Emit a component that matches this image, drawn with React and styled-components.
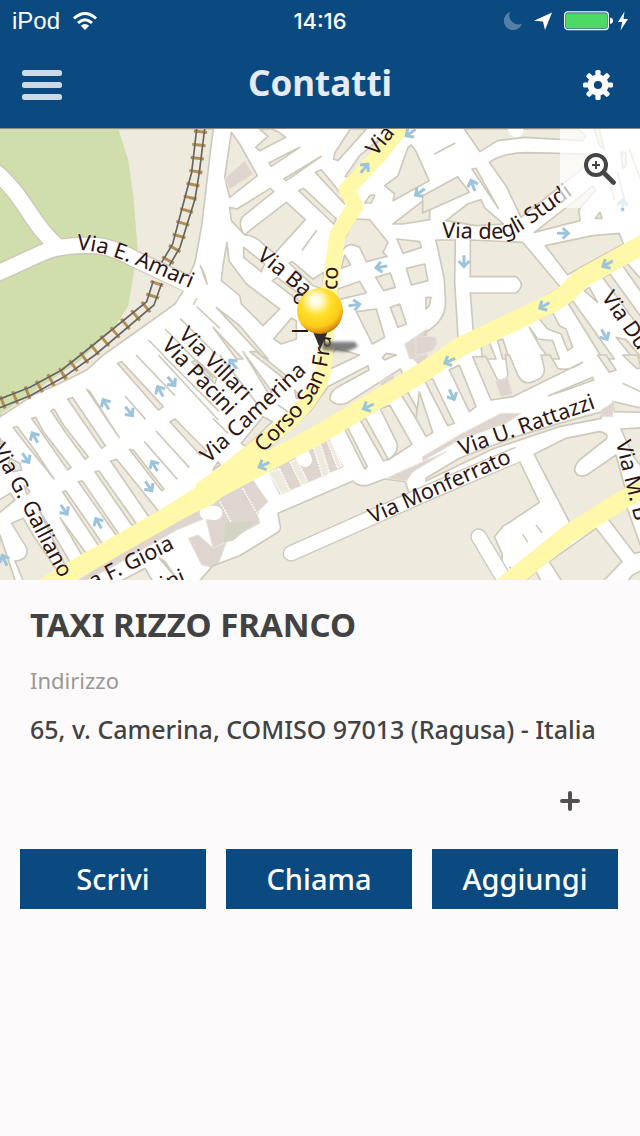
import React from "react";
import styled, { createGlobalStyle } from "styled-components";

const GlobalStyle = createGlobalStyle`
  * {
    box-sizing: border-box;
  }

  body {
    margin: 0;
    background: #fcfafb;
    font-family: "Noto Sans", "Open Sans", sans-serif;
    color: #424242;
  }
`;

const Screen = styled.div`
  display: flex;
  flex-direction: column;
  min-height: 100vh;
`;

const Header = styled.header`
  background: #0b4a80;
  color: white;
`;

const StatusBar = styled.div`
  display: grid;
  grid-template-columns: 1fr auto 1fr;
  align-items: center;
  height: 42px;
  padding: 0 12px;
  font-family: "Liberation Sans", Arial, sans-serif;
  font-size: 24px;
`;

const StatusGroup = styled.div`
  display: flex;
  align-items: center;
  justify-content: ${props => (props.$end ? "flex-end" : "flex-start")};
  gap: 12px;
`;

const Power = styled.div`
  display: flex;
  align-items: center;
  gap: 5px;
`;

const Clock = styled.div`
  font-family: Inter, "Liberation Sans", sans-serif;
  font-size: 22px;
  font-weight: 500;
`;

const NavBar = styled.nav`
  display: grid;
  grid-template-columns: 1fr auto 1fr;
  align-items: center;
  height: 86px;
  padding: 0 20px;
`;

const Title = styled.h1`
  margin: 0;
  padding-bottom: 4px;
  font-size: 35px;
  line-height: 44px;
  font-weight: 700;
  color: #e6ebf3;
`;

const IconButton = styled.button`
  display: flex;
  align-items: center;
  justify-content: center;
  justify-self: ${props => props.$side || "start"};
  width: 44px;
  height: 44px;
  padding: 0;
  border: 0;
  background: none;
  color: ${props => props.$color || "white"};
`;

const MapBox = styled.section`
  position: relative;
  border-top: 1px solid #8b8a86;
  background: white;

  > svg {
    display: block;
    width: 100%;
    height: auto;
  }
`;

// sits over the top right corner of the map
const ZoomButton = styled.button`
  position: absolute;
  top: 0;
  right: 0;
  display: flex;
  align-items: center;
  justify-content: center;
  width: 80px;
  height: 79px;
  padding: 0;
  border: 0;
  background: rgba(255, 255, 255, 0.7);
`;

const Details = styled.section`
  padding: 23px 30px 0;
`;

const Name = styled.h2`
  margin: 0 0 17px;
  font-size: 33px;
  line-height: 44px;
  font-weight: 700;
`;

const Label = styled.div`
  margin-bottom: 13px;
  font-size: 22px;
  line-height: 32px;
  color: #999798;
`;

const Address = styled.div`
  font-size: 25px;
  line-height: 40px;
  font-weight: 500;
`;

const MoreRow = styled.div`
  display: flex;
  justify-content: flex-end;
  padding: 30px 48px 26px;
`;

const Actions = styled.div`
  display: flex;
  gap: 20px;
  padding: 0 22px 0 20px;
`;

const ActionButton = styled.button`
  flex: 1;
  height: 60px;
  padding: 0 0 2px;
  border: 0;
  background: #0b4a80;
  color: white;
  font-family: inherit;
  font-size: 29px;
  font-weight: 500;
`;

// every sector is drawn from its own top left corner
const sectors = [
  {
    x: 639,
    y: 0,
    land: `M55,10 L35,145 50,205 133,140 80,45Z M140,0 L165,22 128,55 140,65 218,25 195,8 175,0Z
      M167,102 L260,55 175,112Z M212,150 L325,82 220,155Z M362,90 L365,72 412,0 460,0 375,95Z
      M50,235 L72,240 172,178 182,188 90,262 Q72,285 95,318 L55,275Z
      M220,220 L277,272 185,373 150,345 Q125,318 95,318 L110,305Z
      M92,355 L155,405 145,428 92,385Z M228,402 L238,398 300,450 332,430 330,480 300,470Z
      M178,455 L192,445 280,510 270,525Z
      M42,340 L48,395 100,465 200,540 150,590 85,525 80,500 25,455 30,410Z
      M257,185 L272,178 370,270 362,285Z M307,130 L325,122 385,195 395,225Z
      M397,142 L440,80 500,30 480,70 405,145Z M268,363 L310,305 270,360Z
      M400,320 L425,270 470,272 525,340 510,370 522,382 460,398 440,355 Q405,335 388,365 L385,330Z
      M455,222 L470,200 485,198 475,222Z
      M585,55 L595,48 608,65 648,155 540,215 545,195 515,170 555,140Z
      M650,200 L540,285 570,285 650,272Z M552,330 L620,338 625,355 570,373Z
      M580,418 L635,405 645,455 595,468Z M488,445 L532,432 547,475 512,485Z
      M375,480 L440,457 460,492 365,515Z M395,378 L413,408 385,418Z
      M430,548 L490,540 515,625 478,645Z M532,535 L560,525 580,585 555,595Z
      M182,630 L235,568 250,575 250,630 205,645Z M10,535 L80,590 165,690 145,680Z
      M0,595 L90,690 70,690Z M-18,465 L-24,440 -38,410Z`,
    pale: `M35,150 L95,95 120,135 50,180Z M575,645 L642,600 660,690 590,690Z`,
  },
  {
    x: 1278,
    y: 0,
    land: `M115,0 L162,68 215,35 295,25 470,35 480,20 455,0Z M25,75 L88,42
      M-10,200 L95,143 130,190 -10,252Z
      M190,100 Q230,72 300,71 L495,75 480,110 285,265 240,170Z M138,120 L150,118 217,238Z
      M125,225 L165,212 175,235 232,285 150,290 60,275Z
      M325,310 L460,205 500,170 508,185 458,242 462,275Z M508,268 L522,250 528,268Z
      M358,350 L500,320 580,313 592,345 425,437Z
      M30,333 L88,333 86,460 97,640 0,690 0,610 Q65,570 58,510 L55,450Z M0,505 L15,505 10,530 0,540Z
      M133,333 L290,340 403,475 330,520 143,620 133,492 270,492 Q302,468 270,443 L133,443Z
      M475,485 L490,475 515,520Z M530,445 L552,435 650,570 650,610Z M590,410 L600,400 650,455 650,495Z
      M310,595 L335,630 380,635 400,690 370,690 340,650Z
      M340,570 L380,550 400,590 420,600 440,655 425,665 405,615 365,600Z
      M428,525 L440,515 565,690 530,690Z M165,650 L190,640 210,690 170,690Z M215,635 L230,630 250,690 230,690Z
      M505,0 L520,50 535,60 520,0Z M585,70 L600,70 600,110 590,120Z M570,625 L600,632 650,690 615,680Z
      M540,110 L565,215 M575,130 L600,230 M610,60 L650,170`,
    pale: `M-30,625 L0,622 30,625 33,645 20,665 0,672 -30,678Z`,
  },
  {
    x: 0,
    y: 678,
    land: `M353,25 L365,20 490,155 475,165Z M408,0 L525,122 M375,123 L437,193 M260,103 L270,110 357,247Z
      M203,132 L218,128 316,272 305,280Z M153,167 L163,163 190,210 265,305 255,312 195,230Z
      M95,190 L107,187 130,230 213,337 203,345Z M40,218 L52,215 100,280 162,372 80,270Z
      M510,200 L525,192 620,288 600,300Z M468,228 L568,338 M433,260 L532,373 M388,283 L400,285 492,403 485,407Z
      M332,318 L350,313 475,468 450,490Z M285,350 L297,348 412,510 395,510Z
      M235,380 L247,378 362,545 350,543Z M188,410 L197,407 310,570 300,578Z M180,488 L262,600 250,608Z
      M115,460 L215,630 200,640Z M475,0 L655,195 M488,0 L658,170 M575,20 L590,15 650,70 645,85Z
      M30,310 L60,325 65,345 40,350 25,330Z M-10,440 L30,415 45,435 -10,480Z
      M35,505 L70,490 105,550 175,650 150,690 75,690 45,618 Q92,612 78,575Z
      M0,540 L50,690 -10,690Z M0,250 L10,265 0,268Z M72,390 L90,410 80,418Z
      M340,690 L435,640 465,690Z M478,610 L495,620 530,670Z M600,690 L630,670 700,650 670,700Z
      M540,-110 L650,0 M495,-78 L640,70 M445,-45 L490,0 M580,-150 L590,-170 M590,-145 L660,-80`,
    pale: `M210,690 L480,520 700,415 700,455 530,525 330,640 250,680Z M565,550 L595,540 640,580 680,560 650,640 605,630Z`,
  },
  {
    x: 639,
    y: 678,
    land: `M345,95 L465,32 468,45 385,90 Q345,110 352,135 Q370,155 400,145 L562,42 574,68 310,222 110,330 200,250 290,170Z
      M355,0 L370,-20 440,0 352,42Z M508,8 L520,-5 550,0 515,15Z
      M85,265 L150,185 178,200 100,275Z M90,-10 L177,110 168,118Z M110,-10 L130,-10 220,62 215,72Z
      M20,0 L135,150 M0,190 L45,235 M195,150 L255,190 M245,105 L265,130 L250,130Z M0,345 L15,320 22,330Z
      M395,222 L405,220 463,335 455,342Z M442,195 L458,190 525,312 512,318Z
      M502,162 L530,150 597,268 525,315 Q562,290 550,260Z M565,120 L585,112 652,235 640,240Z
      M195,475 L420,378 Q435,396 465,391 L515,372 577,380 590,420 639,440
      L919,318 979,442 869,515 844,545 867,595 870,700 -60,700 0,632 80,602 190,535 Q208,525 200,505Z`,
    pale: `M165,350 L345,250 392,335 200,420Z M-30,455 L120,375 165,440 135,470 140,505 0,580Z
      M500,80 L540,60 552,85 510,105Z M600,10 L642,-5 645,25 620,35Z M520,370 L635,318 700,290 600,350 580,378Z`,
  },
  {
    x: 1278,
    y: 678,
    land: `M-5,75 L20,72 85,205 65,212Z M-20,110 L20,232 0,245 -30,190Z M70,45 L100,30 150,155 130,170Z
      M140,5 L180,5 215,75 Q247,80 245,55 L238,0 250,0 275,60 Q292,92 320,80 Q358,70 355,40 L345,0 372,0 395,40 Q430,50 470,22 L260,125 195,135Z
      M368,122 L500,67 503,75 420,105Z M515,0 L540,0 570,45 550,52Z M590,0 L635,0 645,40 632,40Z
      M590,85 L655,115 M560,140 L650,160 650,172 565,170Z
      M0,370 L100,310 270,245 400,205 530,170 525,190 400,215 200,282 0,378Z
      M325,298 L420,250 520,230 Q550,235 540,252 L460,315 Q435,345 455,360 Q475,368 490,355 L570,300 597,400 435,510Z
      M585,222 L650,218 650,340 620,300Z M545,490 L600,450 650,590 625,595Z
      M370,620 L510,520 588,620 520,690 415,690Z M280,690 L330,650 352,690Z
      M330,510 L348,533 M290,538 L305,562 M250,635 L262,650 M595,690 L620,660 650,645 650,690Z`,
    pale: `M-10,305 L100,240 225,175 285,175 240,205 100,255 -10,318Z M208,78 L245,68 260,118 225,125Z
      M525,165 L565,140 560,185 530,185Z`,
  },
];

// x, y, direction in degrees
const arrows = [
  [1094, 117, -50], [1231, 12, 145], [1259, 190, 145], [1143, 414, 170], [1064, 528, -8],
  [1418, 168, -110], [1392, 398, 90], [1690, 313, 0], [1868, 227, -90], [1822, 405, 150],
  [1632, 530, 150], [1814, 618, 60], [480, 786, -120], [515, 758, 50], [317, 825, -120],
  [388, 848, 50], [104, 925, -120], [78, 988, 55], [463, 1010, -120], [447, 1073, 55],
  [193, 1143, 55], [295, 1182, -120], [13, 1293, -115], [699, 705, -130], [1104, 833, 155],
  [791, 1008, 155], [1348, 696, 155], [1356, 798, 65],
];

// street labels, each written along its own line
const streets = [
  ["amari", "M230,362 C330,365 420,415 600,490", "Via E. Amari"],
  ["villari", "M533,620 L790,880", "Via Villari"],
  ["pacini", "M482,652 L740,922", "Via Pacini"],
  ["camerina", "M626,1004 L980,673", "Via Camerina"],
  ["corso", "M789,972 C900,865 970,800 985,690 L1003,560", "Corso San Fra"],
  ["corso-end", "M1011,484 L1018,340", "co"],
  ["bagni", "M768,386 L960,544", "Via Ba"],
  ["top", "M1128,84 L1230,-42", "Via"],
  ["lido-start", "M924,615 L924,540", "L"],
  ["lido-end", "M918,528 L912,460", "o"],
  ["studi", "M1326,326 L1480,330 Q1530,330 1580,295 L1800,140", "Via degli Studi"],
  ["duca", "M1803,505 L1970,745", "Via Du"],
  ["rattazzi", "M1385,980 L1830,822", "Via U. Rattazzi"],
  ["monferrato", "M1117,1184 L1570,985", "Via Monferrato"],
  ["galliano", "M-26,960 C30,1050 100,1210 204,1390", "Via G. Galliano"],
  ["gioia", "M280,1380 L560,1240", "a F. Gioia"],
  ["gini", "M492,1388 L680,1310", "ini"],
  ["m-bassi", "M1847,940 L1925,1260", "Via M. B"],
];

const StreetName = styled.text`
  font-family: "Noto Sans", sans-serif;
  font-size: 65px;
  fill: #2d1512;
  stroke: rgba(255, 255, 255, 0.5);
  stroke-width: 3px;
  paint-order: stroke;
`;

const RAILS =
  "M590,0 L575,130 555,205 518,345 485,400 M614,0 L598,130 585,210 540,355 508,410 M460,455 L440,518 242,678 L185,723 90,775 0,810 M485,463 L462,528 285,678 L190,745 90,800 0,836";

function StreetMap() {
  return (
    <svg viewBox="0 0 1920 1353" role="img" aria-label="Mappa">
      <defs>
        <radialGradient id="ball" cx="0.42" cy="0.3" r="0.74">
          <stop offset="0" stopColor="#fffbe6" />
          <stop offset="0.2" stopColor="#fff08a" />
          <stop offset="0.42" stopColor="#ffdf2a" />
          <stop offset="0.74" stopColor="#fdca1a" />
          <stop offset="0.9" stopColor="#dd920f" />
          <stop offset="1" stopColor="#a4560a" />
        </radialGradient>
        <filter id="soft" x="-40%" y="-60%" width="180%" height="220%">
          <feGaussianBlur stdDeviation="5" />
        </filter>
        <filter id="glow" x="-60%" y="-60%" width="220%" height="220%">
          <feGaussianBlur stdDeviation="11" />
        </filter>
      </defs>
      <rect width="1920" height="1356" fill="#fff" />

      {/* park and railway land */}
      <path
        d="M0,0 L640,0 632,60 625,120 605,290 585,400 567,440 548,488 525,525 420,600 310,678 260,723 180,763 100,798 0,863Z"
        fill="#eeeade"
        stroke="#cfc9bb"
        strokeWidth="5"
      />
      <path
        d="M0,0 L355,0 385,95 400,200 413,360 400,440 385,530 350,585 240,695 150,755 0,856Z"
        fill="#cfdeaa"
      />
      <g fill="none" strokeLinecap="round">
        <g stroke="#cdc7b9" strokeWidth="54">
          <path d="M-30,115 C70,190 90,280 165,345" />
          <path d="M-30,443 L130,370 Q190,345 290,350 Q340,355 400,388 L550,458" />
        </g>
        <g stroke="#fff" strokeWidth="46">
          <path d="M-30,115 C70,190 90,280 165,345" />
          <path d="M-30,443 L130,370 Q190,345 290,350 Q340,355 400,388 L610,488" />
        </g>
      </g>
      <path
        d="M602,4 L587,130 570,208 529,350 497,405 M472,459 L451,523 264,678 L188,734 90,788 0,823"
        fill="none"
        stroke="#b38f55"
        strokeWidth="40"
        strokeDasharray="9 31"
      />
      <path d={RAILS} fill="none" stroke="#656565" strokeWidth="5" />

      {sectors.map(s => (
        <g key={`${s.x}-${s.y}`} transform={`translate(${s.x} ${s.y})`} strokeLinejoin="round">
          <path d={s.land} fill="#eeeade" stroke="#cfc9bb" strokeWidth="5" />
          <path d={s.pale} fill="#ded5cf" stroke="#e9e2dc" strokeWidth="3" />
        </g>
      ))}

      {/* building rows south of the main street */}
      <g fill="#eeeade" stroke="#fff" strokeWidth="4" strokeDasharray="6 3">
        <path d="M806,1030 L838,1018 872,1088 845,1097Z M870,1000 L890,990 925,1062 905,1070Z" />
        <path d="M940,955 L962,948 990,1035 968,1045Z M980,932 L990,928 1025,1010 1012,1016Z" />
        <path d="M728,1078 L785,1178 M660,1118 L715,1220" fill="none" />
      </g>
      <path d="M675,1180 L765,1178 700,1235 672,1240Z" fill="#d3d5c2" />
      <g fill="none" strokeLinecap="round">
        <g stroke="#cfc9bb" strokeWidth="50">
          <path d="M873,1273 L1290,1088 1545,980" />
          <path d="M1436,1223 L1530,1380" />
        </g>
        <g stroke="#fff" strokeWidth="42">
          <path d="M873,1273 L1290,1088 1570,970" />
          <path d="M1436,1223 L1530,1380" />
          <path d="M900,960 L915,993" />
          <path d="M620,1150 L646,1152" />
          <path d="M1545,0 L1549,4" />
        </g>
      </g>

      {/* main streets */}
      <g fill="none" stroke="#fef8a8" strokeLinejoin="round">
        <path
          d="M1215,-20 L1140,75 1040,182 1066,232 1012,318 987,500 974,678 968,735 Q935,825 845,895 L690,1020 600,1085"
          strokeWidth="48"
        />
        <path
          d="M1940,340 L1770,434 Q1735,450 1708,486 Q1680,510 1640,530 L1378,655 1281,722 959,915 639,1085 175,1350 120,1385"
          strokeWidth="58"
        />
        <path d="M1940,1068 L1708,1213 1505,1376" strokeWidth="56" />
      </g>
      <path d="M470,1150 L640,1040 745,970 850,960 640,1125 500,1192Z" fill="#fef8a8" />

      <g fill="none" stroke="#9cc5dc" strokeWidth="9">
        {arrows.map(([x, y, deg]) => (
          <path
            key={`${x}-${y}`}
            d="M-19,0 H14 M-2,-16 L15,0 L-2,16"
            transform={`translate(${x} ${y}) rotate(${deg})`}
          />
        ))}
      </g>

      {streets.map(([id, d, name]) => (
        <React.Fragment key={id}>
          <path id={`street-${id}`} d={d} fill="none" />
          <StreetName>
            <textPath href={`#street-${id}`}>{name}</textPath>
          </StreetName>
        </React.Fragment>
      ))}

      {/* pin */}
      <path d="M965,638 L1065,638 1074,653 1040,668 968,664Z" fill="#555" opacity="0.75" filter="url(#soft)" />
      <path d="M938,606 L984,606 961,660Z" fill="#2e2e2e" />
      <circle cx="960" cy="546" r="69" fill="url(#ball)" />
      <ellipse cx="946" cy="512" rx="28" ry="24" fill="#fff" opacity="0.75" filter="url(#glow)" />
    </svg>
  );
}

function WifiIcon() {
  return (
    <svg width="26" height="20" viewBox="0 0 26 20" fill="none" stroke="white" strokeWidth="3">
      <path d="M2 7.5 Q13 -2.5 24 7.5" />
      <path d="M6 12 Q13 5.5 20 12" />
      <path d="M13 19 L8.8 14.8 Q13 11.4 17.2 14.8Z" fill="white" stroke="none" />
    </svg>
  );
}

function BatteryIcon() {
  return (
    <svg width="49" height="20" viewBox="0 0 49 20">
      <rect x="0.7" y="0.9" width="43.6" height="17.6" rx="3" fill="none" stroke="white" strokeWidth="1.3" />
      <rect x="2" y="2.2" width="41" height="15" rx="1.5" fill="#4cd964" />
      <path d="M46 6.5 Q49 7 49 9.8 Q49 12.5 46 13Z" fill="white" />
    </svg>
  );
}

const teeth = [0, 45, 90, 135, 180, 225, 270, 315];

function GearIcon() {
  return (
    <svg width="30" height="30" viewBox="-15 -15 30 30" fill="white">
      <circle r="7.3" fill="none" stroke="white" strokeWidth="6.4" />
      {teeth.map(deg => (
        <rect key={deg} x="-2.6" y="-15" width="5.2" height="7" rx="1.6" transform={`rotate(${deg})`} />
      ))}
    </svg>
  );
}

export default function App() {
  return (
    <Screen>
      <GlobalStyle />
      <Header>
        <StatusBar>
          <StatusGroup>
            <span>iPod</span>
            <WifiIcon />
          </StatusGroup>
          <Clock>14:16</Clock>
          <StatusGroup $end>
            <svg width="18" height="20" viewBox="1 0 18 20" fill="#5580a6">
              <path d="M7 1 A9.3 9.3 0 1 0 19 12.6 A9 9 0 0 1 7 1Z" />
            </svg>
            <svg width="18" height="20" viewBox="1 0 18 20" fill="white">
              <path d="M19 1.5 L1 9.8 L10 10.5 L12 19Z" />
            </svg>
            <Power>
              <BatteryIcon />
              <svg width="10" height="20" viewBox="0 0 10 20" fill="white">
                <path d="M6.5 0.5 L0 11 L4.2 11 L2.5 19.5 L10 8 L5.5 8Z" />
              </svg>
            </Power>
          </StatusGroup>
        </StatusBar>
        <NavBar>
          <IconButton aria-label="Menu">
            <svg width="40" height="30" viewBox="0 0 40 30" fill="#cddae6">
              <rect width="40" height="6" rx="2.5" />
              <rect y="12" width="40" height="6" rx="2.5" />
              <rect y="24" width="40" height="6" rx="2.5" />
            </svg>
          </IconButton>
          <Title>Contatti</Title>
          <IconButton $side="end" aria-label="Impostazioni">
            <GearIcon />
          </IconButton>
        </NavBar>
      </Header>

      <MapBox>
        <StreetMap />
        <ZoomButton aria-label="Ingrandisci mappa">
          <svg width="32" height="32" viewBox="0 0 32 32" fill="none" stroke="#454545">
            <circle cx="12" cy="12" r="10" strokeWidth="4" />
            <path d="M19.5 19.5 L29.5 29.5" strokeWidth="4.6" strokeLinecap="round" />
            <path d="M12 8 V16 M8 12 H16" strokeWidth="2" />
          </svg>
        </ZoomButton>
      </MapBox>

      <Details>
        <Name>TAXI RIZZO FRANCO</Name>
        <Label>Indirizzo</Label>
        <Address>65, v. Camerina, COMISO 97013 (Ragusa) - Italia</Address>
      </Details>
      <MoreRow>
        <IconButton $color="#525152" aria-label="Altro">
          <svg width="20" height="20" viewBox="0 0 20 20" stroke="currentColor" strokeWidth="4" strokeLinecap="round">
            <path d="M10 2 V18 M2 10 H18" />
          </svg>
        </IconButton>
      </MoreRow>
      <Actions>
        <ActionButton>Scrivi</ActionButton>
        <ActionButton>Chiama</ActionButton>
        <ActionButton>Aggiungi</ActionButton>
      </Actions>
    </Screen>
  );
}
